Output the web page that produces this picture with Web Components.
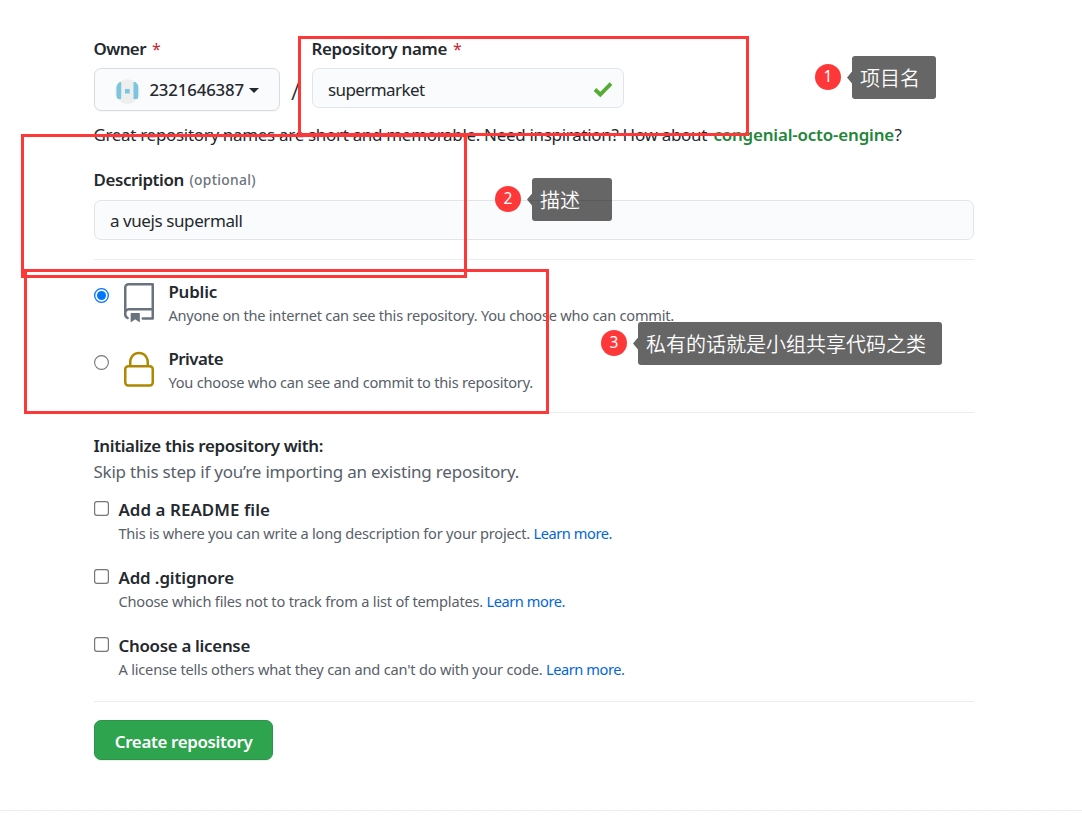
<!DOCTYPE html>
<html lang="en">
<head>
<meta charset="utf-8">
<title>Create a new repository</title>
<style>
html,body{margin:0;padding:0;background:#fff}
body{width:1082px;height:823px;overflow:hidden;font-family:"Noto Sans","Open Sans","Noto Sans CJK SC",sans-serif;color:#24292e}
</style>
</head>
<body>
<new-repository></new-repository>
<script>
const define = (name, html, setup) => customElements.define(name, class extends HTMLElement {
  connectedCallback() {
    if (this.shadowRoot) return;
    const t = document.createElement('template');
    t.innerHTML = html;
    this.attachShadow({mode: 'open'}).append(t.content.cloneNode(true));
    if (setup) setup(this, this.shadowRoot);
  }
});

/* A single line of text tracked to a given measure. kind: body | title | note */
define('text-line', `<style>
:host{display:block;white-space:nowrap;font-size:17px;line-height:24px;height:24px;flex:none}
:host([kind=title]){font-weight:560;font-size:16.9px}
:host([kind=note]){font-size:14.6px;line-height:20px;height:20px;color:#586069}
:host([kind=small]){font-size:13.8px;font-weight:540;color:#6a737d}
:host([kind=link]){font-size:14.6px;line-height:20px;height:20px;color:#0366d6}
span{display:inline-block;margin-left:-.6px}
</style><span><slot></slot></span>`, (el, root) => {
  const w = parseFloat(el.getAttribute('w'));
  el.style.width = w + 'px';
  const s = root.querySelector('span');
  s.style.letterSpacing = (w - .4 - s.getBoundingClientRect().width) / el.textContent.length + 'px';
});

define('required-mark', `<style>:host{display:block;color:#cb2431;font-size:16px;line-height:24px;width:8px;margin-left:5px}</style>*`);

define('rule-line', `<style>:host{display:block;height:1px;background:#eaecef}</style>`);

define('owner-picker', `<style>
:host{display:flex;align-items:center;box-sizing:border-box;width:186px;height:43px;border:1px solid #d9dbde;border-radius:7px;background:#fafbfc;padding:1px 0 0 20px;box-shadow:0 1px 0 rgba(27,31,35,.03)}
text-line{margin-left:10px;font-size:16.8px;font-weight:500}
.caret{margin-left:4px}
svg{display:block;flex:none}
.face{margin-top:2px}
</style>
<svg class="face" width="25" height="25" viewBox="0 0 25 25"><clipPath id="c"><circle cx="12.5" cy="12.5" r="12.3"/></clipPath><g clip-path="url(#c)"><rect width="25" height="25" fill="#eee"/><path fill="#7cc5df" d="M1.5 3h4.7v17H1.5zM18.5 3h4.7v17h-4.7zM10 10h4.7v4.5H10z"/></g></svg>
<text-line w="95">2321646387</text-line>
<svg class="caret" width="10" height="5" viewBox="0 0 10 5"><path fill="#24292e" d="M0 0h10L5 5z"/></svg>`);

define('text-field', `<style>
:host{display:flex;align-items:center;justify-content:space-between;box-sizing:border-box;height:40px;border:1px solid #e1e4e8;border-radius:7px;background:#fafbfc;padding:2px 10px 0 15.5px}
</style><slot></slot><slot name="end"></slot>`);

define('check-icon', `<style>:host{display:block;margin-top:-1px}svg{display:block}</style>
<svg width="20" height="17" viewBox="0 0 20 17"><path d="M2 8.5l5.3 5L18 2.7" fill="none" stroke="#55ab34" stroke-width="3.8"/></svg>`);

define('choice-mark', `<style>:host{display:block;width:15px;height:15px;flex:none}svg{display:block}
.radio,.on{display:none}
:host([radio]) .radio{display:block}:host([radio]) .box{display:none}
:host([checked]) .radio{display:none}:host([checked]) .on{display:block}
</style>
<svg width="15" height="15" viewBox="0 0 15 15">
<rect class="box" x=".6" y=".6" width="13.8" height="13.8" rx="2.4" fill="#fff" stroke="#767676" stroke-width="1.2"/>
<circle class="radio" cx="7.5" cy="7.5" r="6.9" fill="#fff" stroke="#767676" stroke-width="1.1"/>
<g class="on"><circle cx="7.5" cy="7.5" r="6.85" fill="#fff" stroke="#0075ff" stroke-width="1.3"/><circle cx="7.5" cy="7.5" r="4.5" fill="#0075ff"/></g>
</svg>`);

define('visibility-option', `<style>
:host{display:flex;height:45px}
choice-mark{margin-top:8px}
.icon{width:40px;margin:3px 10px 0 10px}
.t{display:grid;row-gap:1px;align-content:start}
::slotted(svg){display:block}
</style><choice-mark radio></choice-mark><div class="icon"><slot name="icon"></slot></div><div class="t"><slot></slot></div>`,
(el, root) => { if (el.hasAttribute('checked')) root.querySelector('choice-mark').setAttribute('checked', ''); });

define('init-option', `<style>
:host{display:flex;height:46px}
choice-mark{margin:3px 10px 0 0}
.t{display:grid;row-gap:1px;align-content:start}
.n{display:flex;gap:3px}
</style><choice-mark></choice-mark><div class="t"><slot></slot><div class="n"><slot name="note"></slot></div></div>`);

define('primary-button', `<style>
:host{display:flex;box-sizing:border-box;width:179px;height:40px;border:1px solid #2b9449;border-radius:7px;background:#2ea44f;color:#fff;padding:9px 0 0 20.4px;box-shadow:0 1px 0 rgba(27,31,35,.08)}
</style><slot></slot>`);

/* Red outline laid over the form */
define('mark-frame', `<style>:host{position:absolute;box-sizing:border-box;border:3px solid #fe3838}</style>`);

/* Numbered red dot with a dark callout */
define('mark-note', `<style>
:host{position:absolute;display:flex;align-items:center;height:43px}
.dot{width:26px;height:26px;border-radius:50%;background:#fe3838;color:#fff;font-size:15.5px;line-height:24px;text-align:center;margin-top:-1px}
.arrow{width:5px;height:12px;margin-left:6px;background:rgba(0,0,0,.6);clip-path:polygon(100% 0,100% 100%,0 50%)}
.tip{box-sizing:border-box;flex:1;height:43px;border-radius:3px;background:rgba(0,0,0,.6);color:#fff;font:20px/43px "Noto Sans CJK SC",sans-serif;font-weight:350;padding-left:8px;white-space:nowrap}
</style><div class="dot"><slot name="n"></slot></div><div class="arrow"></div><div class="tip"><slot></slot></div>`);

define('new-repository', `<style>
:host{display:block;position:relative;width:1082px;height:823px}
main{display:flex;flex-direction:column;padding:37px 108px 0 94px;height:773px;box-sizing:border-box}
.row{display:flex}
.slash{width:32px;padding:40px 0 0 11px;box-sizing:border-box;font-size:28px;line-height:24px;font-weight:300}
.col{display:grid;row-gap:7px;align-content:start}
.hint{margin-top:12px}
.green{color:#22863a;font-weight:560;font-size:16.9px}
</style>
<main>
  <div class="row" style="height:74px">
    <div class="col"><div class="row"><text-line kind="title" w="53">Owner</text-line><required-mark></required-mark></div><owner-picker></owner-picker></div>
    <div class="slash">/</div>
    <div class="col"><div class="row"><text-line kind="title" w="136">Repository name</text-line><required-mark></required-mark></div>
      <text-field style="width:312px;padding-top:3px"><text-line w="97">supermarket</text-line><check-icon slot="end"></check-icon></text-field></div>
  </div>
  <div class="row hint"><text-line w="614" style="margin-right:6px">Great repository names are short and memorable. Need inspiration? How about</text-line><text-line class="green" w="181">congenial-octo-engine</text-line><text-line w="8">?</text-line></div>
  <div class="row" style="margin-top:21px"><text-line kind="title" w="91" style="margin-right:5px">Description</text-line><text-line kind="small" w="67">(optional)</text-line></div>
  <text-field style="margin-top:8px"><text-line w="133">a vuejs supermall</text-line></text-field>
  <rule-line style="margin-top:19px"></rule-line>
  <visibility-option checked style="margin-top:20px">
    <svg slot="icon" width="40" height="40" viewBox="0 0 24 24" fill="#6a737d"><path fill-rule="evenodd" d="M3 2.75A2.75 2.75 0 015.75 0h14.5a.75.75 0 01.75.75v20.5a.75.75 0 01-.75.75h-6a.75.75 0 010-1.5h5.25v-4H6A1.5 1.5 0 004.5 18v.75c0 .716.43 1.334 1.05 1.605a.75.75 0 01-.6 1.374A3.25 3.25 0 013 18.75v-16zM19.5 1.5V15H6c-.546 0-1.059.146-1.5.401V2.75c0-.69.56-1.25 1.25-1.25H19.5z"/><path d="M7 18.25a.25.25 0 01.25-.25h5a.25.25 0 01.25.25v5.01a.25.25 0 01-.397.201l-2.206-1.604a.25.25 0 00-.294 0L7.397 23.46a.25.25 0 01-.397-.2v-5.01z"/></svg>
    <text-line kind="title" w="49">Public</text-line><text-line kind="note" w="506">Anyone on the internet can see this repository. You choose who can commit.</text-line>
  </visibility-option>
  <visibility-option style="margin-top:22px">
    <svg slot="icon" width="40" height="40" viewBox="0 0 24 24" fill="#b08800"><path fill-rule="evenodd" d="M6 9V7.25C6 3.845 8.503 1 12 1s6 2.845 6 6.25V9h.5a2.5 2.5 0 012.5 2.5v8a2.5 2.5 0 01-2.5 2.5h-13A2.5 2.5 0 013 19.5v-8A2.5 2.5 0 015.5 9H6zm1.5-1.75C7.5 4.58 9.422 2.5 12 2.5c2.578 0 4.5 2.08 4.5 4.75V9h-9V7.25zm-3 4.25a1 1 0 011-1h13a1 1 0 011 1v8a1 1 0 01-1 1h-13a1 1 0 01-1-1v-8z"/></svg>
    <text-line kind="title" w="55">Private</text-line><text-line kind="note" w="365">You choose who can see and commit to this repository.</text-line>
  </visibility-option>
  <rule-line style="margin-top:20px"></rule-line>
  <text-line kind="title" w="230" style="margin-top:21px">Initialize this repository with:</text-line>
  <text-line w="426" style="margin-top:2px;color:#586069">Skip this step if you’re importing an existing repository.</text-line>
  <init-option style="margin-top:14px"><text-line kind="title" w="152">Add a README file</text-line><text-line slot="note" kind="note" w="412">This is where you can write a long description for your project.</text-line><text-line slot="note" kind="link" w="79">Learn more.</text-line></init-option>
  <init-option style="margin-top:22px"><text-line kind="title" w="116">Add .gitignore</text-line><text-line slot="note" kind="note" w="365">Choose which files not to track from a list of templates.</text-line><text-line slot="note" kind="link" w="79">Learn more.</text-line></init-option>
  <init-option style="margin-top:22px"><text-line kind="title" w="132">Choose a license</text-line><text-line slot="note" kind="note" w="424.5">A license tells others what they can and can't do with your code.</text-line><text-line slot="note" kind="link" w="79">Learn more.</text-line></init-option>
  <rule-line style="margin-top:21px"></rule-line>
  <primary-button style="margin-top:18px"><text-line kind="title" w="138">Create repository</text-line></primary-button>
</main>
<rule-line style="margin-top:37px"></rule-line>
<mark-frame style="left:298px;top:36px;width:451px;height:100px"></mark-frame>
<mark-frame style="left:21px;top:134px;width:446px;height:144px"></mark-frame>
<mark-frame style="left:24px;top:269px;width:525px;height:145px"></mark-frame>
<mark-note style="left:815px;top:56px;width:121px"><span slot="n">1</span>项目名</mark-note>
<mark-note style="left:495px;top:178px;width:117px"><span slot="n">2</span>描述</mark-note>
<mark-note style="left:601px;top:322px;width:341px"><span slot="n">3</span>私有的话就是小组共享代码之类</mark-note>`);
</script>
</body>
</html>
